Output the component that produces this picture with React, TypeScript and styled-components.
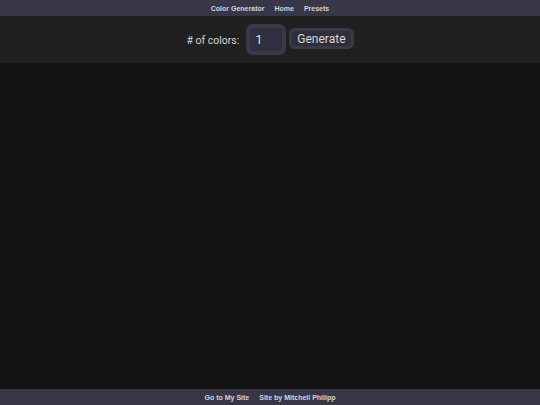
import React, { useState } from "react";
import styled, { createGlobalStyle } from "styled-components";

const GlobalStyle = createGlobalStyle`
  html, body {
    margin: 0;
    padding: 0;
    background-color: #121212;
  }
  * {
    box-sizing: border-box;
  }
`;

const Page = styled.div`
  display: flex;
  flex-direction: column;
  height: 100vh;
  background-color: #121212;
`;

const Bar = styled.nav`
  display: flex;
  justify-content: center;
  align-items: center;
  gap: 10px;
  height: 16px;
  flex-shrink: 0;
  background-color: #373747;
`;

const BarLink = styled.a`
  color: #d4d4d8;
  font-family: "Liberation Sans", Arial, sans-serif;
  font-size: 7px;
  font-weight: 700;
  text-decoration: none;
  cursor: pointer;
`;

const Toolbar = styled.div`
  display: flex;
  justify-content: center;
  align-items: center;
  height: 47px;
  flex-shrink: 0;
  background-color: #202020;
  box-shadow: 0 1px 2px rgba(0, 0, 0, 0.4);
`;

const Label = styled.label`
  color: #d2d2d2;
  font-family: Roboto, "Liberation Sans", sans-serif;
  font-size: 10.5px;
  margin-right: 7px;
  margin-top: 1px;
`;

const CountInput = styled.input`
  width: 40px;
  height: 31px;
  padding: 0 0 0 5px;
  background-color: #2f2f3f;
  border: 4px solid #3a3a44;
  border-radius: 7px;
  color: #dcdcdc;
  font-family: Roboto, "Liberation Sans", sans-serif;
  font-size: 13px;
  outline: none;
  margin-right: 3px;
`;

const GenerateButton = styled.button`
  height: 21px;
  padding: 0 5px;
  background-color: #2e2e3c;
  border: 3px solid #3a3a44;
  border-radius: 6px;
  color: #d8d8d8;
  font-family: Roboto, "Liberation Sans", sans-serif;
  font-size: 12px;
  line-height: 1;
  cursor: pointer;
  margin-bottom: 2px;
`;

const Canvas = styled.main`
  flex: 1;
  background-color: #121212;
`;

const Footer = styled(Bar).attrs({ as: "footer" })``;

const App: React.FC = () => {
  const [count, setCount] = useState("1");

  return (
    <>
      <GlobalStyle />
      <Page>
        <Bar>
          <BarLink>Color Generator</BarLink>
          <BarLink>Home</BarLink>
          <BarLink>Presets</BarLink>
        </Bar>
        <Toolbar>
          <Label htmlFor="count"># of colors:</Label>
          <CountInput
            id="count"
            value={count}
            onChange={(e) => setCount(e.target.value)}
          />
          <GenerateButton>Generate</GenerateButton>
        </Toolbar>
        <Canvas />
        <Footer>
          <BarLink>Go to My Site</BarLink>
          <BarLink>Site by Mitchell Philipp</BarLink>
        </Footer>
      </Page>
    </>
  );
};

export default App;
